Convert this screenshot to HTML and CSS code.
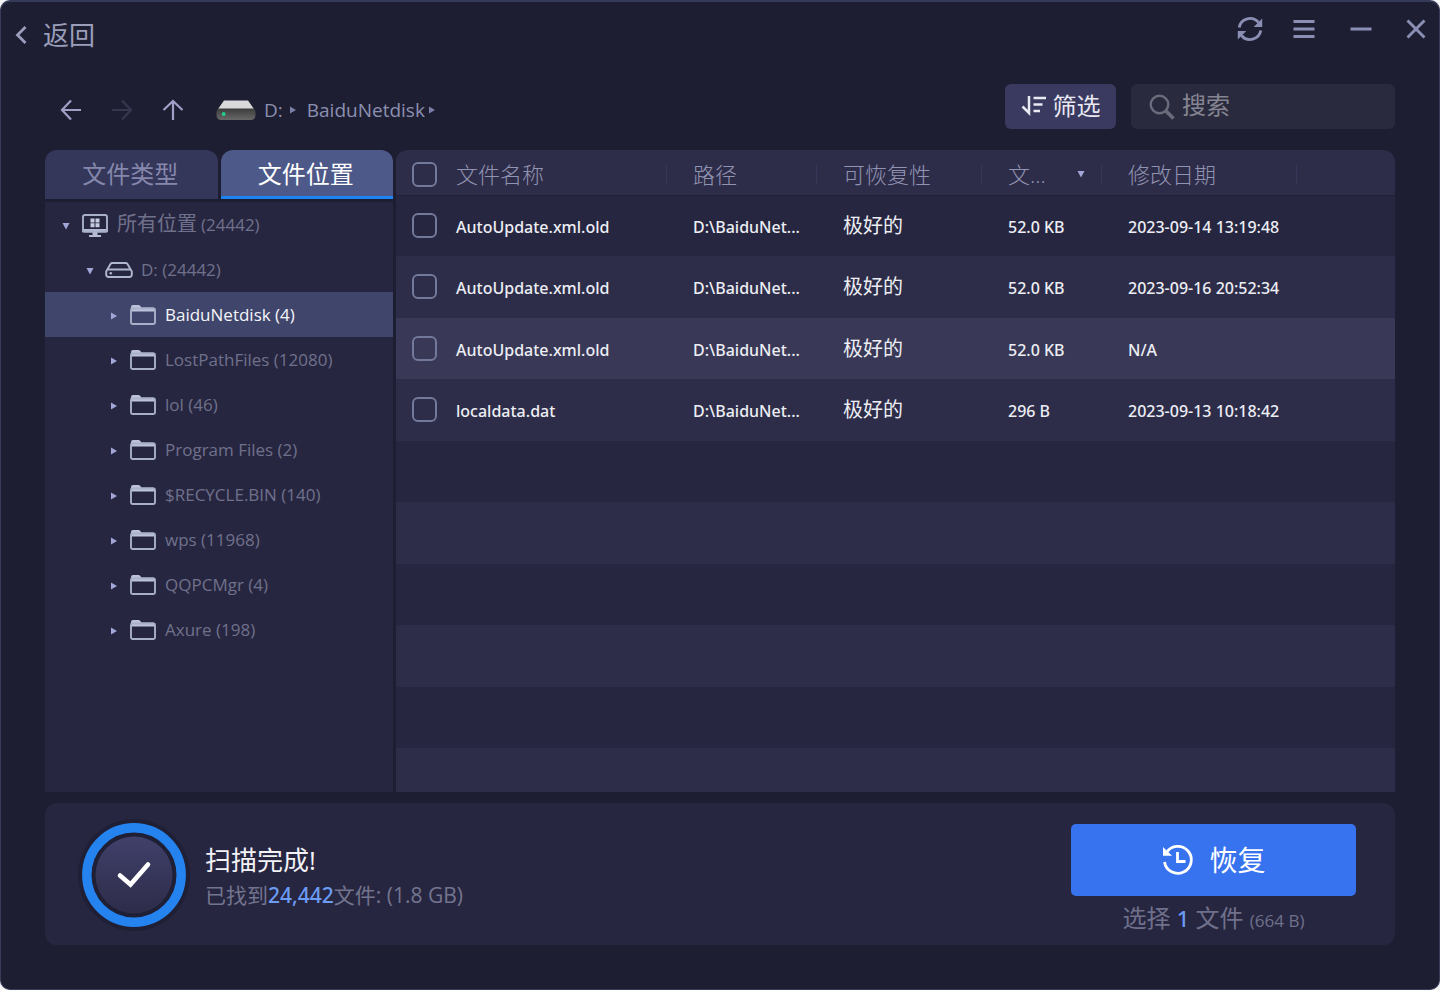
FILE: index.html
```html
<!DOCTYPE html>
<html lang="zh-CN">
<head>
<meta charset="utf-8">
<title>文件恢复</title>
<link rel="stylesheet" href="styles.css">
</head>
<body>
<svg class="sprite" aria-hidden="true">
  <symbol id="folder" viewBox="0 0 28 24">
    <path d="M2 5.500V4q0-2 2-2h5.500q1 0 1.600.8L12.500 4.500H24q2 0 2 2V8.500H2z" fill="#bcc2da"/>
    <rect x="2" y="5.500" width="24" height="15.500" rx="1.500" fill="none" stroke="#a9b0c9" stroke-width="1.900"/>
  </symbol>
  <symbol id="right" viewBox="0 0 8 10"><path d="M1 1.500L7 5 1 8.500z" fill="#a3a7d8"/></symbol>
  <symbol id="down" viewBox="0 0 10 8"><path d="M1.500 1h7L5 7.500z" fill="#a3a7d8"/></symbol>
</svg>
<div class="window">
  <header class="titlebar">
    <button class="back" type="button">
      <svg width="14" height="22" viewBox="0 0 14 22"><path d="M11.500 3L3.500 11l8 8" fill="none" stroke="currentColor" stroke-width="2.800"/></svg>
      返回
    </button>
    <div class="controls">
      <button type="button" aria-label="刷新"><svg width="28" height="28" viewBox="0 0 28 28"><path d="M3.200 12.400A11 11 0 0 1 22.500 7.500M24.800 15.600A11 11 0 0 1 5.500 20.500" fill="none" stroke="currentColor" stroke-width="2.900"/><path d="M26.200 3.500V12h-8.500zM1.800 24.500V16h8.500z" fill="currentColor"/></svg></button>
      <button type="button" aria-label="菜单"><svg width="28" height="28" viewBox="0 0 28 28"><path d="M3.500 6.500h21M3.500 14h21M3.500 21.500h21" stroke="currentColor" stroke-width="2.800"/></svg></button>
      <button type="button" aria-label="最小化"><svg width="28" height="28" viewBox="0 0 28 28"><path d="M3.500 14h21" stroke="currentColor" stroke-width="3"/></svg></button>
      <button type="button" aria-label="关闭"><svg width="28" height="28" viewBox="0 0 28 28"><path d="M5.500 5.500l17 17M22.500 5.500l-17 17" stroke="currentColor" stroke-width="2.900"/></svg></button>
    </div>
  </header>

  <div class="toolbar">
    <nav class="nav" aria-label="路径">
      <button type="button" aria-label="后退"><svg width="24" height="24" viewBox="0 0 24 24"><path d="M22 12H3M12 2.500L3 12l9 9.500" fill="none" stroke="currentColor" stroke-width="2.200"/></svg></button>
      <button type="button" aria-label="前进" disabled><svg width="24" height="24" viewBox="0 0 24 24"><path d="M2 12h19M12 2.500L21 12l-9 9.500" fill="none" stroke="currentColor" stroke-width="2.200"/></svg></button>
      <button type="button" aria-label="向上"><svg width="24" height="24" viewBox="0 0 24 24"><path d="M12 22V3M2.500 12L12 3l9.500 9" fill="none" stroke="currentColor" stroke-width="2.200"/></svg></button>
      <div class="crumbs">
        <svg width="40" height="22" viewBox="0 0 40 22">
          <defs><linearGradient id="disk" x1="0" y1="0" x2="0" y2="1"><stop offset="0" stop-color="#3c3c3c"/><stop offset="1" stop-color="#686868"/></linearGradient></defs>
          <path d="M8 1.500h24L38 10H2z" fill="#d9d9d9"/>
          <path d="M2 9.500h36q1.500 2 1.500 4.500v2q0 5-5 5h-29q-5 0-5-5v-2q0-2.500 1.500-4.500z" fill="url(#disk)"/>
          <circle cx="7.700" cy="15" r="1.900" fill="#1fd18a"/>
        </svg>
        <a href="#">D:</a>
        <svg class="sep" width="8" height="10"><use href="#right"/></svg>
        <a href="#">BaiduNetdisk</a>
        <svg class="sep" width="8" height="10"><use href="#right"/></svg>
      </div>
    </nav>
    <button class="filter" type="button">
      <svg width="26" height="22" viewBox="0 0 26 22"><path d="M1.500 11.500L8 18V1" fill="none" stroke="currentColor" stroke-width="2.500"/><path d="M12.500 3h12.500M12.500 9.500h9M12.500 16h6.500" stroke="currentColor" stroke-width="2.300"/></svg>
      筛选
    </button>
    <label class="search">
      <svg width="28" height="28" viewBox="0 0 28 28"><circle cx="11.500" cy="11.500" r="8.800" fill="none" stroke="currentColor" stroke-width="2.400"/><path d="M18 18l7.500 7.500" stroke="currentColor" stroke-width="3.800"/></svg>
      <input type="text" placeholder="搜索" aria-label="搜索">
    </label>
  </div>

  <main class="panels">
    <aside class="sidebar">
      <div class="tabs" role="tablist">
        <button type="button" role="tab">文件类型</button>
        <button type="button" role="tab" class="active" aria-selected="true">文件位置</button>
      </div>
      <ul class="tree">
        <li class="root"><svg width="10" height="8"><use href="#down"/></svg>
          <svg width="28" height="26" viewBox="0 0 28 26"><path d="M1 17h26v2q0 1.500-1.500 1.500h-23Q1 20.500 1 19zM11.500 20h5v3h3.500v2H8v-2h3.500z" fill="#b4bad2"/><rect x="2" y="3" width="24" height="16.500" rx="2" fill="none" stroke="#a9b0c9" stroke-width="1.900"/><path d="M9.500 6.500h4v4h-4zM14.500 6.500h4v4h-4zM9.500 11.300h4v4h-4zM14.500 11.300h4v4h-4z" fill="#c6cbe0"/></svg>
          <span class="big">所有位置</span><span>(24442)</span></li>
        <li class="drive"><svg width="10" height="8"><use href="#down"/></svg>
          <svg width="28" height="24" viewBox="0 0 28 24"><path d="M1.200 13.500L5.500 6q.6-1 1.800-1h13.400q1.200 0 1.800 1l4.300 7.500v3q0 2.500-2.500 2.500H3.700q-2.500 0-2.500-2.500zM3 11.500h22" fill="none" stroke="#b0b6cf" stroke-width="1.900"/><circle cx="5.800" cy="15.200" r="1.300" fill="#b0b6cf"/></svg>
          <span>D: (24442)</span></li>
        <li class="selected"><svg width="8" height="10"><use href="#right"/></svg><svg width="28" height="24"><use href="#folder"/></svg><span>BaiduNetdisk (4)</span></li>
        <li><svg width="8" height="10"><use href="#right"/></svg><svg width="28" height="24"><use href="#folder"/></svg><span>LostPathFiles (12080)</span></li>
        <li><svg width="8" height="10"><use href="#right"/></svg><svg width="28" height="24"><use href="#folder"/></svg><span>lol (46)</span></li>
        <li><svg width="8" height="10"><use href="#right"/></svg><svg width="28" height="24"><use href="#folder"/></svg><span>Program Files (2)</span></li>
        <li><svg width="8" height="10"><use href="#right"/></svg><svg width="28" height="24"><use href="#folder"/></svg><span>$RECYCLE.BIN (140)</span></li>
        <li><svg width="8" height="10"><use href="#right"/></svg><svg width="28" height="24"><use href="#folder"/></svg><span>wps (11968)</span></li>
        <li><svg width="8" height="10"><use href="#right"/></svg><svg width="28" height="24"><use href="#folder"/></svg><span>QQPCMgr (4)</span></li>
        <li><svg width="8" height="10"><use href="#right"/></svg><svg width="28" height="24"><use href="#folder"/></svg><span>Axure (198)</span></li>
      </ul>
    </aside>

    <section class="files">
      <table>
        <colgroup><col class="c-check"><col class="c-name"><col class="c-path"><col class="c-state"><col class="c-size"><col class="c-date"><col></colgroup>
        <thead>
          <tr><th><input type="checkbox" aria-label="全选"></th><th><div class="head">文件名称</div></th><th><div class="head">路径</div></th><th><div class="head">可恢复性</div></th><th><div class="head"><span>文...</span><svg width="10" height="8"><use href="#down"/></svg></div></th><th><div class="head">修改日期</div></th><th></th></tr>
        </thead>
        <tbody>
          <tr><td><input type="checkbox" aria-label="选择 AutoUpdate.xml.old"></td><td>AutoUpdate.xml.old</td><td>D:\BaiduNet...</td><td class="state">极好的</td><td>52.0 KB</td><td>2023-09-14 13:19:48</td><td></td></tr>
          <tr><td><input type="checkbox" aria-label="选择 AutoUpdate.xml.old"></td><td>AutoUpdate.xml.old</td><td>D:\BaiduNet...</td><td class="state">极好的</td><td>52.0 KB</td><td>2023-09-16 20:52:34</td><td></td></tr>
          <tr class="hover"><td><input type="checkbox" aria-label="选择 AutoUpdate.xml.old"></td><td>AutoUpdate.xml.old</td><td>D:\BaiduNet...</td><td class="state">极好的</td><td>52.0 KB</td><td>N/A</td><td></td></tr>
          <tr><td><input type="checkbox" aria-label="选择 localdata.dat"></td><td>localdata.dat</td><td>D:\BaiduNet...</td><td class="state">极好的</td><td>296 B</td><td>2023-09-13 10:18:42</td><td></td></tr>
          <tr><td colspan="7"></td></tr>
          <tr><td colspan="7"></td></tr>
          <tr><td colspan="7"></td></tr>
          <tr><td colspan="7"></td></tr>
          <tr><td colspan="7"></td></tr>
          <tr><td colspan="7"></td></tr>
        </tbody>
      </table>
    </section>
  </main>

  <footer class="status">
    <svg class="done" width="114" height="114" viewBox="0 0 114 114">
      <defs><linearGradient id="disc" x1="0" y1="0" x2="0" y2="1"><stop offset="0" stop-color="#40406a"/><stop offset="1" stop-color="#2d2c4a"/></linearGradient></defs>
      <circle cx="57" cy="57" r="56" fill="#1f1f35"/>
      <circle cx="57" cy="57" r="47.200" fill="none" stroke="#2583f0" stroke-width="9.400"/>
      <circle cx="57" cy="57" r="38.500" fill="url(#disc)"/>
      <path d="M43 57.500L53.500 66.500 71 46.500" fill="none" stroke="#fff" stroke-width="4.600" stroke-linecap="round"/>
    </svg>
    <div class="summary">
      <h2>扫描完成!</h2>
      <p>已找到<b>24,442</b>文件: (1.8 GB)</p>
    </div>
    <div class="action">
      <button type="button" class="recover">
        <svg width="34" height="34" viewBox="0 0 34 34"><path d="M5.500 9.500A13.500 13.500 0 1 1 3.500 19" fill="none" stroke="currentColor" stroke-width="2.800"/><path d="M2 4L11 12.800H2z" fill="currentColor"/><path d="M16.500 9V18.500h8" fill="none" stroke="currentColor" stroke-width="2.800"/></svg>
        恢复
      </button>
      <p>选择 <b>1</b> 文件 <small>(664 B)</small></p>
    </div>
  </footer>
</div>
</body>
</html>
```

FILE: styles.css
```css
* { box-sizing: border-box; }

body {
  margin: 0;
  background: #f4f4f6;
  color: #8589a8;
  font: 18px/24px "Open Sans", "Noto Sans CJK SC", sans-serif;
}

button {
  padding: 0;
  border: 0;
  background: none;
  color: inherit;
  font: inherit;
}

svg { flex: none; display: block; }
.sprite { position: absolute; width: 0; height: 0; }
p, h2, ul { margin: 0; padding: 0; }

.window {
  display: flex;
  flex-direction: column;
  min-height: 100vh;
  padding: 0 44px 44px;
  border: 1px solid #383c58;
  border-top: 2px solid #353a59;
  border-radius: 10px;
  background: #1e1e33;
}

.titlebar {
  display: flex;
  justify-content: space-between;
  align-items: flex-start;
  height: 82px;
  margin: 0 -32px;
  padding-top: 13px;
}

.back {
  display: flex;
  align-items: center;
  gap: 15px;
  margin-top: 4px;
  padding-left: 1px;
  color: #9a9ebb;
  font-size: 26px;
  line-height: 32px;
}

.controls {
  display: grid;
  grid-template-columns: 54px 57px 55px 28px;
  margin-right: -3px;
  color: #8b8fb4;
}

.toolbar { display: flex; height: 45px; margin-bottom: 21px; }

.nav {
  display: flex;
  flex: 1;
  align-items: center;
  gap: 27px;
  padding: 6px 0 0 14px;
  color: #a09fc6;
}
.nav button:disabled { color: #37364f; }

.crumbs { display: flex; align-items: center; margin-left: 4px; color: #8c90b0; font-size: 19px; }
.crumbs a { margin: 0 6px 0 8px; color: inherit; text-decoration: none; }
.crumbs .sep { opacity: .7; }
.crumbs .sep + a { margin: 0 3px 0 10px; }

.filter {
  display: flex;
  align-items: center;
  justify-content: center;
  gap: 6px;
  width: 111px;
  margin-right: 15px;
  padding-bottom: 1px;
  border-radius: 6px;
  background: #3a3a60;
  color: #e9e9f2;
  font-size: 24px;
}

.search {
  display: flex;
  align-items: center;
  gap: 6px;
  width: 264px;
  padding-left: 17px;
  border-radius: 6px;
  background: #2a2a3e;
  color: #6b6b7b;
}
.search input {
  flex: 1;
  min-width: 0;
  padding: 0 0 4px;
  border: 0;
  outline: 0;
  background: none;
  color: #c8c8d6;
  font: 24px/32px "Open Sans", "Noto Sans CJK SC", sans-serif;
}
.search input::placeholder { color: #858592; opacity: 1; }

.panels { display: flex; flex: 1; gap: 3px; margin-bottom: 11px; }

.sidebar { display: flex; flex-direction: column; width: 348px; }
.tabs { display: flex; gap: 3px; height: 49px; margin-bottom: 3px; }
.tabs button {
  flex: 1;
  padding: 2px 2px 3px 0;
  border-radius: 12px 12px 0 0;
  background: #34365a;
  color: #8587ac;
  font-size: 24px;
}
.tabs .active {
  background: linear-gradient(to top, #1d83f2 3px, #4d5989 3px);
  color: #fff;
}

.tree { flex: 1; background: #272640; color: #6f718c; font-size: 17px; list-style: none; }
.tree li { display: flex; align-items: center; height: 45px; padding-left: 65px; }
.tree li > svg:first-child { margin: 3px 11px 0 0; }
.tree li > span { margin-left: 8px; }
.tree .root { padding-left: 16px; }
.tree .root > svg:first-child, .tree .drive > svg:first-child { margin-right: 10px; }
.tree .root .big { font-size: 20px; padding-bottom: 1px; }
.tree .root span + span { margin-left: 4px; }
.tree .drive { padding-left: 40px; }
.tree .selected { background: #40466b; color: #f4f5fa; }

.files { flex: 1; height: 642px; overflow: hidden; border-radius: 12px 12px 0 0; background: #272640; }
table { width: 100%; border-collapse: collapse; table-layout: fixed; }
.c-check { width: 60px; }
.c-name { width: 211px; }
.c-path { width: 150px; }
.c-state { width: 165px; }
.c-size { width: 120px; }
.c-date { width: 195px; }

th, td { padding: 0 0 0 26px; text-align: left; white-space: nowrap; }
th:first-child, td:first-child { padding-left: 16px; }
th:nth-child(2), td:nth-child(2) { padding-left: 0; }
th { height: 45px; padding-top: 4px; border-bottom: 1px solid #1f1f36; background: #2e2d49; color: #9193b2; font-size: 22px; font-weight: 300; }
.head { display: flex; align-items: center; justify-content: space-between; height: 18px; padding-right: 15px; border-right: 1px solid #37375a; }

tbody tr { height: 61px; color: #eceef4; font-family: "Noto Sans", "Noto Sans CJK SC", sans-serif; font-size: 16px; font-weight: 500; }
tbody tr:nth-child(even) { height: 62px; background: #2e2d49; }
tbody tr.hover { background: #393857; }
tbody td { padding-top: 2px; }
tbody td:first-child { padding-top: 0; padding-bottom: 1px; }
tbody .state { padding-top: 0; font-size: 20px; font-weight: 400; }

input[type="checkbox"] {
  display: block;
  width: 25px;
  height: 25px;
  margin: 0;
  border: 2px solid #73799a;
  border-radius: 6px;
  appearance: none;
}

.status {
  display: flex;
  align-items: center;
  height: 142px;
  padding: 2px 39px 0 32px;
  border-radius: 12px;
  background: #272640;
}
.summary { flex: 1; margin-left: 14px; padding-top: 2px; color: #73758f; font-size: 21px; line-height: 32px; }
.summary h2 { color: #f2f2f7; font-size: 26px; font-weight: 400; line-height: 38px; }
.status b { color: #6b9bf5; font-family: "Noto Sans", sans-serif; font-weight: 500; }

.action { width: 285px; padding-top: 10px; color: #6f718c; font-size: 24px; line-height: 32px; text-align: center; }
.recover {
  display: flex;
  align-items: center;
  justify-content: center;
  gap: 14px;
  width: 100%;
  height: 72px;
  margin-bottom: 6px;
  border-radius: 5px;
  background: #3873ef;
  color: #fff;
  font-size: 28px;
}
.action b { font-size: 22px; }
.action small { font-size: 17px; }
```
